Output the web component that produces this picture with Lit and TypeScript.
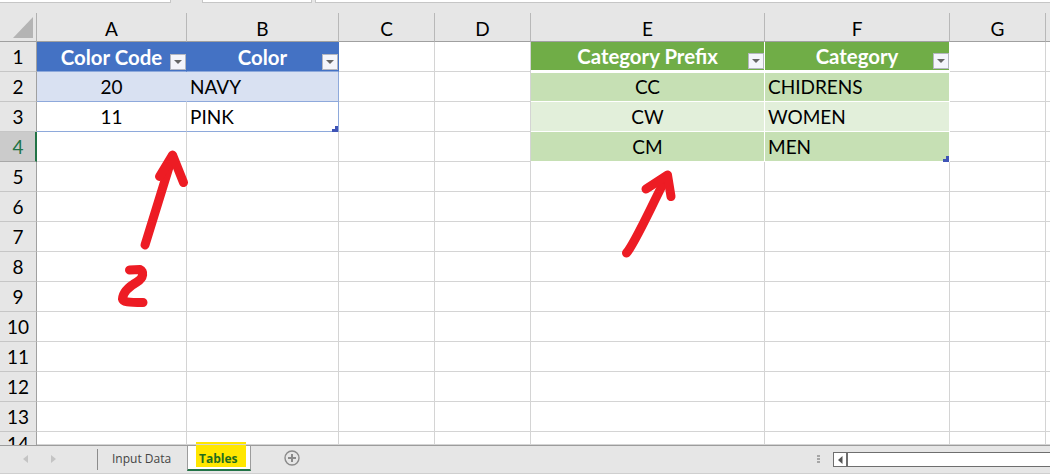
import { LitElement, html, css, svg } from "lit";
import { customElement } from "lit/decorators.js";
import { classMap } from "lit/directives/class-map.js";

type Cell = { t?: string; center?: boolean; filter?: boolean; handle?: boolean; cls?: string };

const COLS = ["A", "B", "C", "D", "E", "F", "G", ""];
const ROWS = [1, 2, 3, 4, 5, 6, 7, 8, 9, 10, 11, 12, 13, 14];

const DATA: Record<string, Cell> = {
  A1: { t: "Color Code", center: true, filter: true, cls: "hb" },
  B1: { t: "Color", center: true, filter: true, cls: "hb hb-end" },
  A2: { t: "20", center: true, cls: "b1" },
  B2: { t: "NAVY", cls: "b1 b-end" },
  A3: { t: "11", center: true, cls: "b2" },
  B3: { t: "PINK", handle: true, cls: "b2 b-end" },
  E1: { t: "Category Prefix", center: true, filter: true, cls: "hg" },
  F1: { t: "Category", center: true, filter: true, cls: "hg" },
  E2: { t: "CC", center: true, cls: "g1 first" },
  F2: { t: "CHIDRENS", cls: "g1 first" },
  E3: { t: "CW", center: true, cls: "g2" },
  F3: { t: "WOMEN", cls: "g2" },
  E4: { t: "CM", center: true, cls: "g1" },
  F4: { t: "MEN", handle: true, cls: "g1" },
};

@customElement("app-root")
export class AppRoot extends LitElement {
  static styles = css`
    :host {
      display: flex;
      flex-direction: column;
      position: relative;
      width: 1050px;
      height: 474px;
      overflow: hidden;
      background: #e6e6e6;
      font-family: "Lato", "Carlito", "Liberation Sans", sans-serif;
      color: #000;
    }
    .ribbon {
      display: flex;
      height: 13px;
      flex: none;
    }
    .ribbon span {
      height: 3px;
      box-sizing: border-box;
      background: #fff;
      border: 1px solid #c6c6c6;
      border-top: 0;
    }
    .r1 { width: 172px; margin-left: -1px; }
    .r2 { width: 110px; margin-left: 31px; }
    .r3 { flex: 1; margin-left: 3px; margin-right: -1px; }

    .sheet {
      display: grid;
      grid-template-columns: 37px 150px 152px 96px 96px 234px 185px 96px 5px;
      grid-template-rows: 29px repeat(13, 30px) 13px;
      height: 432px;
      flex: none;
      background: #fff;
      overflow: hidden;
    }
    .corner {
      display: flex;
      justify-content: flex-end;
      padding: 4px 3px 3px 0;
      box-sizing: border-box;
      background: #e6e6e6;
      border-right: 1px solid #b0b0b0;
      border-bottom: 1px solid #a0a0a0;
    }
    .corner i {
      display: block;
      width: 20px;
      height: 21px;
      background: #b4b4b4;
      clip-path: polygon(100% 0, 100% 100%, 0 100%);
    }
    .ch {
      display: flex;
      align-items: center;
      justify-content: center;
      box-sizing: border-box;
      background: #e6e6e6;
      border-right: 1px solid #b8b8b8;
      border-bottom: 1px solid #a0a0a0;
      font-size: 19px;
      padding-top: 3px;
    }
    .ch.last { border-right: 0; }
    .rh {
      display: flex;
      align-items: center;
      justify-content: center;
      box-sizing: border-box;
      background: #e6e6e6;
      border-right: 1px solid #a0a0a0;
      border-bottom: 1px solid #c6c6c6;
      font-size: 19px;
    }
    .rh.sel {
      background: #cbcbcb;
      color: #217346;
      border-right: 2px solid #217346;
      border-bottom-color: #a8a8a8;
      padding-left: 1px;
    }
    .rh.clip { align-items: flex-start; border-bottom: 0; }
    .c {
      position: relative;
      display: flex;
      align-items: center;
      box-sizing: border-box;
      border-right: 1px solid #d4d4d4;
      border-bottom: 1px solid #d4d4d4;
      padding-left: 3px;
      font-size: 19px;
      white-space: nowrap;
    }
    .c.center { justify-content: center; padding-left: 0; }
    .c.hb {
      background: #4472c4;
      color: #fff;
      font-weight: 700;
      font-size: 20.4px;
      border-right-color: #4472c4;
      border-bottom-color: #8ea9db;
    }
    .c.hb-end { border-right-color: #4472c4; }
    .c.b1 {
      background: #d9e1f2;
      border-right-color: #d9e1f2;
      border-bottom-color: #8ea9db;
    }
    .c.b2 { border-bottom-color: #8ea9db; }
    .c.b-end { border-right-color: #8ea9db; }
    .c.hg {
      background: #70ad47;
      color: #fff;
      font-weight: 700;
      font-size: 20.4px;
      border-right-color: #fff;
      border-bottom: 2px solid #fff;
    }
    .c.g1 { background: #c6e0b4; border-right-color: #fff; border-bottom-color: #fff; }
    .c.g2 { background: #e2efda; border-right-color: #fff; border-bottom-color: #fff; }
    .c.first { box-shadow: inset 0 1px 0 #fff; }
    .filter {
      position: absolute;
      right: 0;
      bottom: 1px;
      width: 16px;
      height: 16px;
      box-sizing: border-box;
      display: flex;
      align-items: center;
      justify-content: center;
      background: #f4f5fb;
      border: 1px solid #b4b7c0;
    }
    .filter i {
      display: block;
      width: 8px;
      height: 4px;
      background: #666;
      clip-path: polygon(0 0, 100% 0, 50% 100%);
    }
    .handle {
      position: absolute;
      right: 0;
      bottom: -1px;
      width: 6px;
      height: 6px;
      background: #3f54b6;
      clip-path: polygon(50% 0, 100% 0, 100% 100%, 0 100%, 0 50%, 50% 50%);
    }

    .tabs {
      flex: none;
      height: 29px;
      box-sizing: border-box;
      display: flex;
      align-items: flex-start;
      background: #e6e6e6;
      border-top: 1px solid #9c9c9c;
      border-bottom: 1px solid #cfcfcf;
      font-size: 13px;
    }
    .nav {
      display: flex;
      gap: 21px;
      margin: 9px 0 0 23px;
      width: 74px;
      flex: none;
    }
    .nav svg { display: block; }
    .sep {
      width: 1px;
      height: 21px;
      margin-top: 3px;
      background: #8c8c8c;
      flex: none;
    }
    .input {
      margin-left: 14px;
      width: 75px;
      line-height: 26px;
      flex: none;
      font-family: "Open Sans", "Liberation Sans", sans-serif;
      font-size: 12px;
      color: #444;
    }
    .tab {
      flex: none;
      width: 62px;
      height: 23px;
      box-sizing: content-box;
      background: #fff;
      border: 1px solid #9c9c9c;
      border-width: 0 1px;
      border-bottom: 2px solid #217346;
      display: flex;
      align-items: flex-start;
    }
    .hl {
      margin: -4px 0 0 8px;
      width: 50px;
      height: 25px;
      background: #ffe600;
      color: #1d6b1d;
      font-family: "Open Sans", "Liberation Sans", sans-serif;
      font-weight: 700;
      font-size: 12px;
      line-height: 33px;
      padding-left: 3px;
      box-sizing: border-box;
    }
    .plus { margin: 4px 0 0 33px; flex: none; display: block; }
    .dots {
      display: flex;
      flex-direction: column;
      gap: 1px;
      margin: 9px 0 0 517px;
      flex: none;
    }
    .dots i { display: block; width: 3px; height: 2px; background: #a6a6a6; }
    .scroll {
      margin: 6px 0 0 13px;
      flex: 1;
      margin-right: -4px;
      height: 15px;
      box-sizing: border-box;
      display: flex;
      background: #fff;
      border: 1px solid #6e6e6e;
    }
    .scroll b {
      width: 14px;
      box-sizing: border-box;
      border-right: 2px solid #6e6e6e;
      display: flex;
      align-items: center;
      justify-content: center;
    }
    .ink {
      position: absolute;
      left: 0;
      top: 0;
      pointer-events: none;
    }
    .ink path {
      fill: none;
      stroke: #ed1c24;
      stroke-width: 9;
      stroke-linecap: round;
      stroke-linejoin: round;
    }
  `;

  private renderCell(col: string, row: number) {
    const d = DATA[`${col}${row}`] ?? {};
    const classes: Record<string, boolean> = { c: true, center: !!d.center };
    (d.cls ?? "").split(" ").filter(Boolean).forEach((k) => (classes[k] = true));
    return html`<div class=${classMap(classes)}>
      ${d.t ?? ""}
      ${d.filter ? html`<span class="filter"><i></i></span>` : ""}
      ${d.handle ? html`<span class="handle"></span>` : ""}
    </div>`;
  }

  render() {
    return html`
      <div class="ribbon">
        <span class="r1"></span><span class="r2"></span><span class="r3"></span>
      </div>
      <div class="sheet">
        <div class="corner"><i></i></div>
        ${COLS.map((c) => html`<div class="ch ${c ? "" : "last"}">${c}</div>`)}
        ${ROWS.map(
          (r) => html`
            <div class="rh ${r === 4 ? "sel" : ""} ${r === 14 ? "clip" : ""}">${r}</div>
            ${COLS.map((c) => this.renderCell(c || "H", r))}
          `
        )}
      </div>
      <div class="tabs">
        <div class="nav">
          <svg width="6" height="8" viewBox="0 0 6 8"><path d="M5 0v8L0 4z" fill="#c4c4c4" /></svg>
          <svg width="6" height="8" viewBox="0 0 6 8"><path d="M1 0v8l5-4z" fill="#c4c4c4" /></svg>
        </div>
        <div class="sep"></div>
        <div class="input">Input Data</div>
        <div class="tab"><div class="hl">Tables</div></div>
        <svg class="plus" width="16" height="16" viewBox="0 0 16 16">
          <circle cx="8" cy="8" r="7" fill="none" stroke="#8a8a8a" stroke-width="1.4" />
          <path d="M8 4v8M4 8h8" stroke="#8a8a8a" stroke-width="2" />
        </svg>
        <div class="dots"><i></i><i></i><i></i></div>
        <div class="scroll">
          <b><svg width="5" height="8" viewBox="0 0 5 8"><path d="M4.5 0v8L0 4z" fill="#555" /></svg></b>
        </div>
      </div>
      <svg class="ink" width="1050" height="474" viewBox="0 0 1050 474">
        ${svg`
          <path d="M145 245 L172.5 156" />
          <path d="M159.5 176.5 L172.5 155 L183.5 182.5" />
          <path d="M129.5 270 L140 269.5 C144 271 144 278 137 282 C130 286 123 291 122.5 299 C123 302 128 302.5 143 302.5" />
          <path d="M626.5 253 C635 243 648 213 667 176" />
          <path d="M646 189 L667.5 175 L671 196.5" />
        `}
      </svg>
    `;
  }
}
